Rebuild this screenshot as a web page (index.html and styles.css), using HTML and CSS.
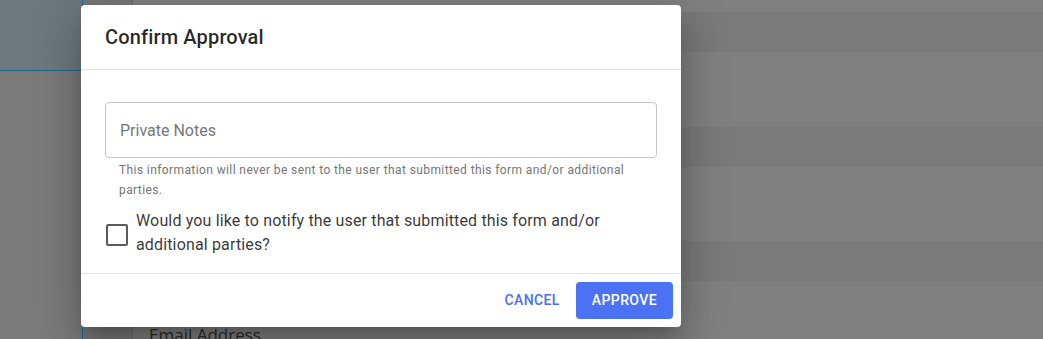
FILE: index.html
```html
<!DOCTYPE html>
<html lang="en">
<head>
<meta charset="utf-8">
<title>Confirm Approval</title>
<link rel="stylesheet" href="styles.css">
</head>
<body>
<div class="page">
  <aside class="side">
    <div class="side-top"></div>
    <div class="side-rest"></div>
  </aside>
  <div class="rail"></div>
  <main class="main">
    <div class="row light h12"></div>
    <div class="row dark h40"></div>
    <div class="row light h75"></div>
    <div class="row dark h40"></div>
    <div class="row light h74"></div>
    <div class="row dark h40"></div>
    <div class="row light last"><span class="bg-label">Email Address</span></div>
  </main>
</div>

<div class="dialog" role="dialog" aria-labelledby="dlg-title">
  <header class="dialog-title" id="dlg-title">Confirm Approval</header>
  <section class="dialog-content">
    <div class="field">
      <input class="field-input" type="text" placeholder="Private Notes">
    </div>
    <p class="helper">This information will never be sent to the user that submitted this form and/or additional parties.</p>
    <label class="check">
      <span class="check-icon"><span class="check-box"></span></span>
      <span class="check-label">Would you like to notify the user that submitted this form and/or additional parties?</span>
    </label>
  </section>
  <footer class="dialog-actions">
    <button class="btn btn-text" type="button">Cancel</button>
    <button class="btn btn-primary" type="button">Approve</button>
  </footer>
</div>
</body>
</html>
```

FILE: styles.css
```css
* { box-sizing: border-box; }

html, body {
  margin: 0;
  padding: 0;
  height: 100%;
  overflow: hidden;
  font-family: Roboto, "Liberation Sans", Arial, sans-serif;
}

body { background: #808080; }

.page {
  display: flex;
  height: 339px;
  overflow: hidden;
}

.side {
  width: 82px;
  display: flex;
  flex-direction: column;
}
.side-top {
  height: 71px;
  background: #6e787c;
  border-bottom: 1px solid #1d6a93;
}
.side-rest {
  flex: 1;
  background: #7b7b7b;
}

.rail {
  width: 51px;
  background: #777777;
  border-left: 1px solid #1d6a93;
  border-right: 1px solid #6c6c6c;
}

.main {
  flex: 1;
  display: flex;
  flex-direction: column;
  overflow: hidden;
}
.row { flex: none; }
.row.light { background: #808080; }
.row.dark { background: #7a7a7a; }
.h12 { height: 12px; }
.h40 { height: 40px; }
.h75 { height: 75px; }
.h74 { height: 74px; }
.last { flex: 1 0 auto; }
.bg-label {
  display: block;
  padding: 42px 0 0 16px;
  line-height: 24px;
  font-family: "Open Sans", "Liberation Sans", sans-serif;
  font-size: 17px;
  color: #2a2a2a;
}

/* dialog overlays the page */
.dialog {
  position: absolute;
  left: 81px;
  top: 5px;
  width: 600px;
  background: #ffffff;
  border-radius: 4px;
  box-shadow: 0 11px 15px -7px rgba(0,0,0,0.2),
              0 24px 38px 3px rgba(0,0,0,0.14),
              0 9px 46px 8px rgba(0,0,0,0.12);
  display: flex;
  flex-direction: column;
}

.dialog-title {
  padding: 16px 24px;
  line-height: 32px;
  font-size: 20px;
  font-weight: 500;
  color: rgba(0,0,0,0.85);
  letter-spacing: 0.15px;
  border-bottom: 1px solid #e0e0e0;
}

.dialog-content {
  padding: 32px 24px 16px;
  display: flex;
  flex-direction: column;
}

.field {
  height: 56px;
  border: 1px solid #c4c4c4;
  border-radius: 4px;
  display: flex;
  align-items: center;
}
.field-input {
  width: 100%;
  border: 0;
  outline: 0;
  background: transparent;
  padding: 0 14px;
  font-family: inherit;
  font-size: 16px;
  color: rgba(0,0,0,0.87);
}
.field-input::placeholder {
  color: #777777;
  opacity: 1;
}

.helper {
  margin: 3px 14px 0;
  font-size: 12px;
  line-height: 19.9px;
  letter-spacing: 0.4px;
  color: #757575;
}

.check {
  margin: 8px 0 0 -11px;
  display: flex;
  align-items: center;
  cursor: pointer;
}
.check-icon {
  flex: none;
  padding: 9px;
  display: flex;
}
.check-icon .check-box {
  width: 24px;
  height: 24px;
  position: relative;
}
.check-icon .check-box::before {
  content: "";
  position: absolute;
  left: 3px;
  top: 3px;
  width: 18px;
  height: 18px;
  border: 2px solid #5a5a5a;
  border-radius: 2px;
}
.check-label {
  font-size: 16px;
  line-height: 24px;
  letter-spacing: 0.15px;
  color: rgba(0,0,0,0.8);
}

.dialog-actions {
  border-top: 1px solid #e0e0e0;
  padding: 8px;
  display: flex;
  justify-content: flex-end;
  gap: 8px;
}

.btn {
  font-family: inherit;
  font-size: 14px;
  font-weight: 500;
  letter-spacing: 0.4px;
  text-transform: uppercase;
  line-height: 24px;
  border: 0;
  border-radius: 4px;
  cursor: pointer;
  height: 37px;
}
.btn-text {
  background: transparent;
  color: #4a6ff0;
  padding: 6px 8px;
}
.btn-primary {
  background: #4a72f2;
  color: #ffffff;
  padding: 6px 16px;
  min-width: 97px;
}
```
